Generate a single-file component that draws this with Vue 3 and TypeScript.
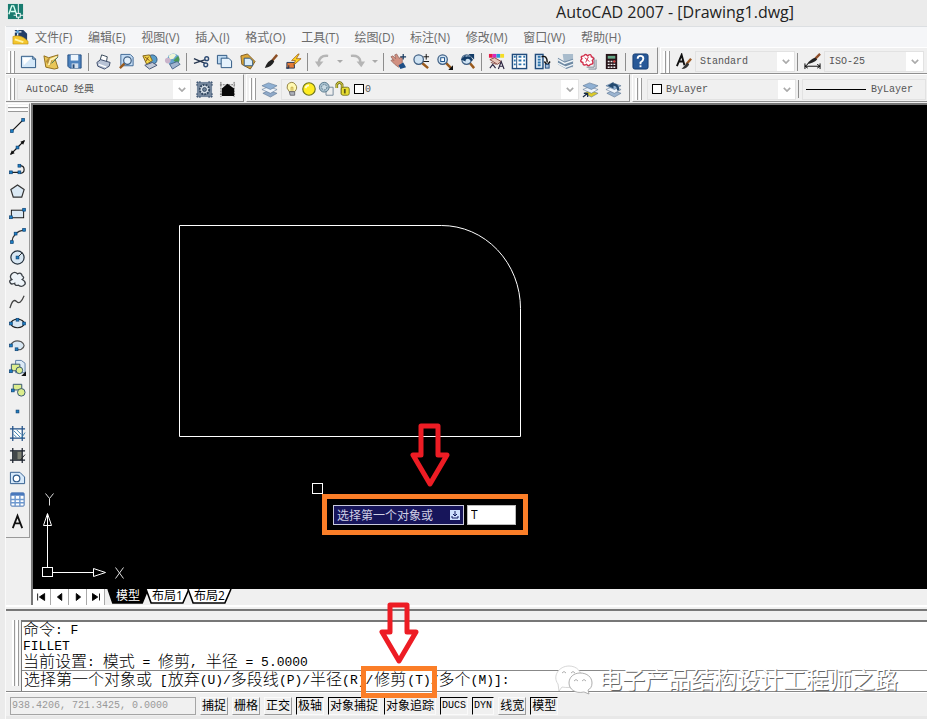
<script setup lang="ts">
import { ref } from 'vue'

interface Tool {
  icon: string
  label: string
}

const blue = '#1f4f86'
const dot = (x: number, y: number) =>
  `<rect x="${x - 1.5}" y="${y - 1.5}" width="3" height="3" fill="#1c7fc4" stroke="#0d3f70" stroke-width=".7"/>`
const lens = (cx: number, cy: number) =>
  `<path d="M${cx + 3} ${cy + 3}L16 16" stroke="#9a5a1c" stroke-width="2.6"/><circle cx="${cx}" cy="${cy}" r="5" fill="#cfe3f3" stroke="#3f5f83" stroke-width="1.3"/>`
const sheets = (accent: string) =>
  `<path d="M2 13l6-3 9 3-7 4z" fill="${accent}" stroke="#567291" stroke-width=".6"/><path d="M1 9l7-3 9 3-7 4z" fill="#eef4fb" stroke="#567291" stroke-width=".6"/><path d="M1 5l7-3 9 3-7 4z" fill="#8fb0d3" stroke="#567291" stroke-width=".6"/>`
const brush =
  '<path d="M16 2l-6 7" stroke="#8c4f25" stroke-width="2.6"/><path d="M11 7q-5 1-8 9q7-1 10-7z" fill="#222"/>'
const printer =
  '<path d="M5 9l2-7 6 2-1 6" fill="#fff" stroke="#345"/><path d="M2 10l4-3 10 3-1 4-5 3-7-3z" fill="#b8c3d6" stroke="#384766"/><path d="M4 12l8 3" stroke="#fff" stroke-width="1.4"/>'
const hash = (fill: string, line: string) =>
  `<rect x="4" y="4" width="10" height="10" fill="${fill}"/><path d="M4 1v16M14 1v16M1 4h16M1 14h16" stroke="${line}" stroke-width="1.3"/>`

const icons: Record<string, string> = {
  app: '<rect x="1" y="1" width="16" height="16" fill="#197c70"/><path d="M2 12L5 3h2l3 9M4 9h5" stroke="#d8fff2" stroke-width="1.5"/><path d="M12 1v16M7 13h10" stroke="#fff"/><rect x="10" y="11" width="4" height="4" fill="#197c70" stroke="#fff"/>',
  doc: '<path d="M3 2h9l4 4v8H3z" fill="#233f68"/><path d="M1 9q8-3 16 5v3H1z" fill="#f4c62d" stroke="#b58a12" stroke-width=".6"/><path d="M3 12l9 3" stroke="#fff5a8" stroke-width="2"/><path d="M6 0v8M2 4h8" stroke="#fff" stroke-width="1.3"/><path d="M6 2l2 2-2 2-2-2z" fill="#58a2d8"/>',
  blank: '<path d="M1.5 3.5h12l3 3v9h-15z" fill="#d5e8f8" stroke="#27537f"/><path d="M3 5h9l-8 8z" fill="#fff"/><path d="M13.5 3.5v3h3" stroke="#27537f"/>',
  open: '<path d="M1 3l5 2 10-3-3 5 3 9-4 1-9-2z" fill="#e9c657" stroke="#8e6b19"/><path d="M3 9l3-4 4 3-3 6z" fill="#b9903b"/><path d="M6 13l2-6 7-3" stroke="#fff2b5" stroke-width="2"/><path d="M9 11l7-7" stroke="#376f55"/>',
  save: '<path d="M2 2h14v14H4l-2-2z" fill="#4d82bd" stroke="#214e82"/><path d="M5 2h8v6H5z" fill="#edf5fc"/><path d="M6 11h7v5H6z" fill="#d3dfed"/><path d="M7 12h2v4H7z" fill="#254a76"/>',
  print: printer,
  preview: '<path d="M3 1.500h10l3 3v9H3z" fill="#c2daf2" stroke="#3d6795"/><path d="M7 11l-5 5" stroke="#9a5a1c" stroke-width="2.500"/><circle cx="10" cy="8" r="4" fill="#e2effa" stroke="#3f5f83" stroke-width="1.300"/>',
  publish: '<circle cx="12" cy="7" r="5" fill="#5a9dc8" stroke="#2c5480"/><path d="M2 3l7-1 3 6-6 4z" fill="#f4d749" stroke="#806117"/><path d="M4 4l5 4M8 4l-3 5" stroke="#80511b"/><path d="M4 13l8-3 5 3-8 4z" fill="#c1c9d8" stroke="#455474"/>',
  globe: '<circle cx="10" cy="7" r="6.500" fill="#65a3cf"/><path d="M5 3q4-4 8-1l-3 4-4 1z" fill="#eef5d7"/><path d="M10 8l5-5q3 5-1 8z" fill="#4b9a54"/><circle cx="4" cy="8" r="3" fill="#c9b4cb"/><path d="M6 12l8-3 3 3-8 5z" fill="#a1b5cf" stroke="#47658b"/>',
  cut: '<path d="M1 6l12 5M1 11L13 7" stroke="#26364f" stroke-width="1.500"/><circle cx="14.500" cy="6" r="2" stroke="#304d75" stroke-width="1.500"/><circle cx="13.500" cy="12.500" r="2" stroke="#304d75" stroke-width="1.500"/>',
  copy: '<path d="M1.500 2.500h10v9h-10z" fill="#bdd9f1" stroke="#29547f"/><path d="M5.500 5.500h8l3 3v7h-11z" fill="#e5f2fc" stroke="#29547f"/>',
  paste: '<path d="M2 3l7-2 8 8-5 8-9-5z" fill="#dba637" stroke="#7e5a20"/><path d="M5.500 5.500h6l3 3v5h-9z" fill="#d9edfb" stroke="#29547f"/>',
  match: brush,
  block: '<path d="M2 10h8v6H2z" fill="#e47b38" stroke="#263958"/><path d="M14 1L7 8h4l-2 5 8-7h-5l3-5z" fill="#ffd51f" stroke="#9c5813" stroke-width=".8"/><path d="M1 16h3v-3" stroke="#102b52"/>',
  undo: '<path d="M15 3Q6 2 5 10" stroke="#b5b5b5" stroke-width="2.500"/><path d="M1 9h9l-5 6z" fill="#b5b5b5"/>',
  redo: '<path d="M2 3q10-1 10 7" stroke="#b5b5b5" stroke-width="2.500"/><path d="M8 9h9l-4 6z" fill="#b5b5b5"/>',
  pan: '<path d="M1 4l2-1 3 3-1-4 2-1 3 5 1-2 2 1v7l-4 3-4-3-4-4 2-1 1 1z" fill="#d19081" stroke="#8c5c54" stroke-width=".7"/><path d="M9 13l5-3 3 5-6 2z" fill="#1e4f86"/><path d="M14 1v6M11 4h6" stroke="#173a60" stroke-width="1.300"/>',
  zoom: lens(6, 7) + '<path d="M14 1v6M11 4h6M11 9h6" stroke="#111"/>',
  zoomwin: lens(7, 7) + '<rect x="5" y="5" width="4" height="4" fill="#fff" stroke="#174e87"/><path d="M13 18h5v-5z" fill="#111"/>',
  zoomprev: lens(8, 7) + '<path d="M5 7q5-5 9 1" stroke="#133c67" stroke-width="2.500"/><path d="M2 7l5-5v7zM10 1h6v6z" fill="#133c67"/>',
  props: '<path d="M1 1h4v4H1z" fill="#e51b47"/><path d="M5 1h4v4H5z" fill="#d42ac0"/><path d="M9 1h4v4H9z" fill="#229fd9"/><path d="M13 1h4v4h-4z" fill="#f6dd22"/><path d="M2 7l5-2 7 4-4 3zM3 10l6 2" fill="#e7c6ba" stroke="#8a4d45"/><path d="M2 16l3-4 3 4M11 17l3-8 3 8M12 14h4" stroke="#2b2540" stroke-width="1.200"/>',
  center: '<rect x="1.500" y="1.500" width="15" height="15" fill="#fff" stroke="#204c7d" stroke-width="1.500"/><path d="M6 2v14" stroke="#204c7d"/><path d="M3 4h2M3 8h2M3 12h2M8 4h3M13 4h2M8 8h3M13 8h2M8 12h3M13 12h2" stroke="#2d76ae" stroke-width="2"/>',
  palette: '<rect x="1.500" y="1.500" width="8" height="15" fill="#dceaf6" stroke="#204c7d" stroke-width="1.500"/><path d="M4 4h3M4 7h3M4 10h3M4 13h3" stroke="#2d76ae" stroke-width="2"/><path d="M8 4q6-2 6 6M11 9l3 4 3-4" stroke="#111" stroke-width="1.500"/><rect x="12" y="12" width="4" height="4" fill="#a7bfdb" stroke="#204c7d"/>',
  sheetset: '<path d="M6 1h11v14H8z" fill="#a9bccc"/><path d="M1 5l7 4 9-3v8l-7 3-9-5z" fill="#6f8aa4"/><path d="M1 7l7 4 9-3M1 11l8 4 8-3" stroke="#eef4f8" stroke-width="1.600"/>',
  markup: '<path d="M7 15h8V5M9 17h8V7" stroke="#75808f"/><path d="M4 3q2-3 4 0q4-3 4 1q4 1 1 4q2 4-2 4q-2 3-4 0q-4 2-4-2q-4-1-1-4q-2-3 2-3z" fill="#fff" stroke="#d12d49" stroke-width="1.500"/><path d="M5 5l5 4M9 4l-3 6" stroke="#d12d49"/>',
  calc: '<rect x="3" y="1" width="12" height="16" fill="#271318"/><path d="M5 3h8v3H5z" fill="#65a686"/><path d="M5 9h2M8 9h2M11 9h2M5 12h2M8 12h2M11 12h2M5 15h2M8 15h2M11 15h2" stroke="#eee" stroke-width="1.500"/><path d="M11 9h2" stroke="#e63333" stroke-width="2"/>',
  help: '<rect x="1" y="1" width="16" height="16" rx="2" fill="#285998" stroke="#143b71"/><path d="M6 6q0-3 3-3t3 3q0 2-3 4v2" stroke="#fff" stroke-width="2"/><path d="M8 14h2" stroke="#fff" stroke-width="2"/>',
  textstyle: '<path d="M2 14L7 2l3 11M4 9h5" stroke="#111" stroke-width="2"/><path d="M17 6l-5 6" stroke="#9b5a27" stroke-width="2.500"/><path d="M13 10l-6 7q6 0 8-5z" fill="#333"/>',
  dimstyle: '<path d="M17 1l-6 6" stroke="#8d4d29" stroke-width="2.500"/><path d="M12 5q-5 1-9 7q7-1 11-5z" fill="#222"/><path d="M1 11v6M17 11v6M2 14h14M4 12l-3 2 3 2M14 12l3 2-3 2" stroke="#000"/>',
  gear: '<path d="M1 1h16v16H1z" fill="#75879d"/><path d="M1 5V1h4M13 1h4v4M17 13v4h-4M5 17H1v-4" stroke="#213c5c" stroke-dasharray="2 1"/><circle cx="9" cy="9" r="5" fill="#d7dfe8" stroke="#31475f" stroke-width="2" stroke-dasharray="2 1"/><circle cx="9" cy="9" r="2" fill="#75879d" stroke="#31475f"/>',
  home: '<path d="M2 1v16M16 1v16M1 4h16M1 14h16" stroke="#666" stroke-dasharray="2 1"/><path d="M3 8l6-5 7 5v8H3z" fill="#080808"/>',
  layers: sheets('#8fa9c8'),
  bulb: '<path d="M6 12Q2 8 4 4q5-5 9 0q3 4-1 8z" fill="#fff9b1" stroke="#887837"/><path d="M6 12h6v4H7z" fill="#aeb2bb" stroke="#65666c"/><path d="M8 11V7h2v4" stroke="#c1a43a"/>',
  sun: '<circle cx="9" cy="9" r="7" fill="#ffec21" stroke="#6e741b" stroke-width="1.300"/><path d="M5 8q1-3 4-3" stroke="#fffdd0" stroke-width="2"/>',
  freeze: '<path d="M9 7h8v9H9z" fill="#eee" stroke="#6c8295"/><circle cx="7" cy="7" r="5.500" fill="#a7bfce" stroke="#537587"/><circle cx="7" cy="7" r="3" fill="#c8d9e2" stroke="#537587" stroke-dasharray="2 1"/>',
  lock: '<path d="M2 8V4q3-5 6 0v4M8 7v8" stroke="#77731a" stroke-width="3"/><path d="M2 8V4q3-5 6 0v4" stroke="#f2ea54"/><rect x="7" y="7" width="9" height="9" rx="2" fill="#e8de31" stroke="#77731a"/><path d="M11 9v5" stroke="#5a5518" stroke-width="2"/>',
  layercur: sheets('#dcca28') + '<path d="M1 17l5-4M2 13h4v4" stroke="#172a45" stroke-width="1.300"/>',
  layerprev: sheets('#9bb4d0') + '<path d="M14 10Q14 3 7 4" stroke="#23496f" stroke-width="2.500"/><path d="M3 5l6-4v7z" fill="#23496f"/>',
  line: `<path d="M3 15L15 3" stroke="#111" stroke-width="1.300"/>${dot(3, 15)}${dot(15, 3)}`,
  xline: `<path d="M2 16L16 2" stroke="#111" stroke-width="1.400"/><path d="M1 17l2-5 3 3zM17 1l-5 2 3 3z" fill="#111"/>${dot(9, 9)}`,
  pline: `<path d="M2 12h10M11 5q5 0 5 4t-4 4" stroke="#222" stroke-width="1.300"/>${dot(2, 12)}${dot(11, 12)}${dot(11, 5)}`,
  polygon: '<path d="M9 2l7 5-2.500 8h-9L2 7z" fill="#dbe9f4" stroke="#333" stroke-width="1.300"/>',
  rect: `<rect x="2.500" y="5.500" width="13" height="8" fill="#dbe9f4" stroke="#111"/>${dot(2, 13)}${dot(16, 5)}`,
  arc: `<path d="M3 16Q4 5 16 3" stroke="#333" stroke-width="1.300"/>${dot(3, 16)}${dot(7, 7)}${dot(16, 3)}`,
  circle: `<circle cx="9" cy="9" r="7" fill="#d8e7f3" stroke="#26323e" stroke-width="1.300"/><path d="M9 9l5-5" stroke="#222"/>${dot(9, 9)}`,
  cloud: '<path d="M3 9Q0 6 3 3q3-3 6 0q4-2 5 2q3 2 0 4q4 2 3 5q-3 4-7 1q-4 1-4-2q-4 2-5-1q-1-2 2-3z" fill="#edf3f8" stroke="#3b4046" stroke-width="1.400"/>',
  spline: '<path d="M1 16Q4 5 8 9t8-6" stroke="#444" stroke-width="1.300"/>',
  ellipse: `<ellipse cx="9" cy="9" rx="7" ry="4.500" fill="#d8e7f3" stroke="#222" stroke-width="1.300"/>${dot(2, 9)}${dot(16, 9)}${dot(9, 5)}`,
  earc: `<path d="M2 8q4-6 11-3q6 4 0 8q-2 1-5 0" fill="#d8e7f3" stroke="#555" stroke-width="1.300"/>${dot(2, 9)}${dot(8, 13)}`,
  insert: `<path d="M7 1.500h6l4 3v10H7z" fill="#dceaf6" stroke="#5a7ca1"/><path d="M2.500 5.500h9v7h-9z" fill="#dced8d" stroke="#31526d"/><circle cx="11" cy="12" r="3.500" fill="#dced8d" stroke="#31526d"/>${dot(2, 13)}<path d="M13 18h5v-5z" fill="#111"/>`,
  make: `<path d="M4.500 3.500h9v6h-9z" fill="#dced8d" stroke="#31526d"/><circle cx="13" cy="12" r="4" fill="#dced8d" stroke="#31526d"/>${dot(4, 10)}`,
  point: dot(9, 9),
  hatch: hash('#fff', blue) + '<path d="M5 6l7 7M8 5l5 5M5 10l3 3M13 14l4-6" stroke="#347ba8"/>',
  gradient: hash('#7d8073', '#171e2a') + '<path d="M4 4h5v10H4z" fill="#42484a"/><path d="M12 14l5-6" stroke="#222"/>',
  region: '<path d="M1.500 3.500h10l5 5v7h-15z" fill="#d8eafb" stroke="#315b8c"/><circle cx="8" cy="10" r="3.500" fill="#fff" stroke="#315b8c" stroke-width="1.300"/>',
  table: '<rect x="2" y="2" width="14" height="14" rx="1" fill="#fff" stroke="#3869ad"/><path d="M2 2h14v3H2z" fill="#4978bc"/><path d="M2 9h14M2 12.500h14M6.500 5v11M11.500 5v11" stroke="#6d98cf" stroke-width="1.500"/>',
  mtext: '<path d="M4 16L9 3l5 13M6 11h6" stroke="#111" stroke-width="1.900"/>',
}

const menus = ['文件(F)', '编辑(E)', '视图(V)', '插入(I)', '格式(O)', '工具(T)', '绘图(D)', '标注(N)', '修改(M)', '窗口(W)', '帮助(H)']

const t = (icon: string, label: string): Tool => ({ icon, label })
const standardGroups: Tool[][] = [
  [t('blank', '新建'), t('open', '打开'), t('save', '保存')],
  [t('print', '打印'), t('preview', '打印预览'), t('publish', '发布'), t('globe', '三维 DWF')],
  [t('cut', '剪切'), t('copy', '复制'), t('paste', '粘贴'), t('match', '特性匹配'), t('block', '块编辑器')],
  [t('undo', '放弃'), t('redo', '重做')],
  [t('pan', '实时平移'), t('zoom', '实时缩放'), t('zoomwin', '窗口缩放'), t('zoomprev', '缩放上一个')],
  [t('props', '特性'), t('center', '设计中心'), t('palette', '工具选项板'), t('sheetset', '图纸集管理器'), t('markup', '标记集管理器'), t('calc', '快速计算器')],
  [t('help', '帮助')],
]
const drawTools: Tool[] = [
  t('line', '直线'), t('xline', '构造线'), t('pline', '多段线'), t('polygon', '正多边形'), t('rect', '矩形'),
  t('arc', '圆弧'), t('circle', '圆'), t('cloud', '修订云线'), t('spline', '样条曲线'), t('ellipse', '椭圆'),
  t('earc', '椭圆弧'), t('insert', '插入块'), t('make', '创建块'), t('point', '点'), t('hatch', '图案填充'),
  t('gradient', '渐变色'), t('region', '面域'), t('table', '表格'), t('mtext', '多行文字'),
]
const layerStates = ['bulb', 'sun', 'freeze', 'lock']
const tabNav = [
  { label: '第一个', d: 'M3 4v8M11 4v8L5 8z' },
  { label: '上一个', d: 'M10 4v8L5 8z' },
  { label: '下一个', d: 'M6 4v8l5-4z' },
  { label: '最后一个', d: 'M4 4v8l6-4zM12 4v8' },
]
const tabs = ['模型', '布局1', '布局2']
const activeTab = ref('模型')

const modes = ref([
  { name: '捕捉', on: false, latin: false },
  { name: '栅格', on: false, latin: false },
  { name: '正交', on: false, latin: false },
  { name: '极轴', on: true, latin: false },
  { name: '对象捕捉', on: true, latin: false },
  { name: '对象追踪', on: true, latin: false },
  { name: 'DUCS', on: true, latin: true },
  { name: 'DYN', on: true, latin: true },
  { name: '线宽', on: false, latin: false },
  { name: '模型', on: true, latin: false },
])
const dynamicValue = ref('T')
const command = ref('')
</script>

<template>
  <div class="window">
    <header class="titlebar">
      <svg class="icon app-icon" viewBox="0 0 18 18" fill="none" v-html="icons.app"></svg>
      <h1>AutoCAD 2007 - [Drawing1.dwg]</h1>
    </header>

    <div class="frame">
      <nav class="menubar">
        <svg class="icon" viewBox="0 0 18 18" fill="none" v-html="icons.doc"></svg>
        <div class="menus">
          <button v-for="m in menus" :key="m" type="button">{{ m }}</button>
        </div>
      </nav>

      <div class="toolrow">
        <div class="toolbar standard">
          <span class="grip"></span>
          <template v-for="(group, gi) in standardGroups" :key="gi">
            <span v-if="gi" class="sep"></span>
            <template v-for="tool in group" :key="tool.icon">
              <button class="tool" type="button" :aria-label="tool.label">
                <svg class="icon" viewBox="0 0 18 18" fill="none" v-html="icons[tool.icon]"></svg>
              </button>
              <button v-if="gi === 3" class="more" type="button" :aria-label="tool.label + '列表'">
                <svg viewBox="0 0 6 4"><path d="M0 0h6L3 3z" fill="#aaa" /></svg>
              </button>
            </template>
          </template>
        </div>
        <div class="toolbar rest">
          <span class="grip"></span>
          <button class="tool" type="button" aria-label="文字样式">
            <svg class="icon" viewBox="0 0 18 18" fill="none" v-html="icons.textstyle"></svg>
          </button>
          <div class="combo style-combo">
            <select aria-label="文字样式"><option>Standard</option></select>
            <svg class="chevron" viewBox="0 0 10 6"><path d="M1 1l4 4 4-4" /></svg>
          </div>
          <span class="sep"></span>
          <button class="tool" type="button" aria-label="标注样式">
            <svg class="icon" viewBox="0 0 18 18" fill="none" v-html="icons.dimstyle"></svg>
          </button>
          <div class="combo style-combo">
            <select aria-label="标注样式"><option>ISO-25</option></select>
            <svg class="chevron" viewBox="0 0 10 6"><path d="M1 1l4 4 4-4" /></svg>
          </div>
        </div>
      </div>

      <div class="toolrow second">
        <div class="toolbar">
          <span class="grip"></span>
          <div class="combo workspace">
            <select aria-label="工作空间"><option>AutoCAD 经典</option></select>
            <svg class="chevron" viewBox="0 0 10 6"><path d="M1 1l4 4 4-4" /></svg>
          </div>
          <button v-for="n in ['gear', 'home']" :key="n" class="tool" type="button" :aria-label="n === 'gear' ? '工作空间设置' : '我的工作空间'">
            <svg class="icon" viewBox="0 0 18 18" fill="none" v-html="icons[n]"></svg>
          </button>
        </div>
        <div class="toolbar">
          <span class="grip"></span>
          <button class="tool" type="button" aria-label="图层特性管理器">
            <svg class="icon" viewBox="0 0 18 18" fill="none" v-html="icons.layers"></svg>
          </button>
          <div class="combo layer">
            <select aria-label="图层"><option>0</option></select>
            <span class="states">
              <svg v-for="s in layerStates" :key="s" class="small-icon" viewBox="0 0 18 18" fill="none" v-html="icons[s]"></svg>
              <i class="swatch"></i>
            </span>
            <svg class="chevron" viewBox="0 0 10 6"><path d="M1 1l4 4 4-4" /></svg>
          </div>
          <button v-for="n in ['layercur', 'layerprev']" :key="n" class="tool" type="button" :aria-label="n === 'layercur' ? '置为当前' : '上一个图层'">
            <svg class="icon" viewBox="0 0 18 18" fill="none" v-html="icons[n]"></svg>
          </button>
        </div>
        <div class="toolbar rest">
          <span class="grip"></span>
          <div class="combo color">
            <select aria-label="颜色"><option>ByLayer</option></select>
            <span class="states"><i class="swatch"></i></span>
            <svg class="chevron" viewBox="0 0 10 6"><path d="M1 1l4 4 4-4" /></svg>
          </div>
          <span class="sep"></span>
          <div class="combo linetype">
            <select aria-label="线型"><option>ByLayer</option></select>
            <span class="states"><i class="stroke"></i></span>
          </div>
        </div>
      </div>

      <main class="workspace-area">
        <aside class="draw-tools">
          <span class="grip flat"></span>
          <button v-for="tool in drawTools" :key="tool.icon" class="draw" type="button" :aria-label="tool.label">
            <svg class="icon" viewBox="0 0 18 18" fill="none" v-html="icons[tool.icon]"></svg>
          </button>
        </aside>

        <section class="viewport">
          <div class="canvas">
            <svg class="drawing" width="600" height="400" fill="none" stroke="#fff" aria-label="圆角矩形">
              <path d="M146.500 120.500H408.500A79 83 0 0 1 487.500 203.500V331.500H146.500z" />
              <rect x="279.500" y="378.500" width="10" height="10" />
            </svg>
            <svg class="ucs" width="100" height="100" fill="none" stroke="#fff" aria-label="坐标系">
              <rect x="9.500" y="78.500" width="10" height="9" />
              <path d="M14.500 78V25M20 83.500h41M10.500 36.500l4-12 4 12zM60.500 79.500l12 4-12 4z" />
              <path d="M12.500 4.500l4 5 4-5M16.500 9.500v7M82.500 78.500l8 11M90.500 78.500l-8 11" stroke="#ddd" />
            </svg>
            <div class="prompt">
              <label for="dyn">选择第一个对象或
                <svg viewBox="0 0 10 10"><rect width="10" height="10" fill="#cfe0ff" /><path d="M5 1v5M3 4l2 2 2-2M2 6v2h6V6" fill="none" stroke="#111b60" /></svg>
              </label>
              <input id="dyn" v-model="dynamicValue" type="text" />
              <svg class="arrow" viewBox="0 0 42 64"><path d="M12 3h17v29h9L21 61 4 32h8z" /></svg>
            </div>
          </div>
          <div class="tabs">
            <button v-for="n in tabNav" :key="n.label" class="nav" type="button" :aria-label="n.label">
              <svg viewBox="0 0 16 16"><path :d="n.d" fill="#000" stroke="#000" /></svg>
            </button>
            <button
              v-for="name in tabs"
              :key="name"
              type="button"
              class="tab"
              :class="{ active: name === activeTab }"
              @click="activeTab = name"
            >
              <svg viewBox="0 0 42 16" preserveAspectRatio="none"><path d="M0 0l5 15h31l6-15" /></svg>
              <span>{{ name }}</span>
            </button>
          </div>
        </section>
      </main>

      <section class="command">
        <span class="grip tall"></span>
        <div class="console">
          <div class="history">
            <p><span>命令</span><code>: F</code></p>
            <p><code>FILLET</code></p>
            <p><span>当前设置</span><code>: </code><span>模式</span><code> = </code><span>修剪</span><code>, </code><span>半径</span><code> = 5.0000</code></p>
          </div>
          <div class="entry">
            <label for="cmd"><span>选择第一个对象或</span><code> [</code><span>放弃</span><code>(U)/</code><span>多段线</span><code>(P)/</code><span>半径</span><code>(R)</code><span class="marked"><code>/</code><span>修剪</span><code>(T)</code><i class="box"></i><svg class="arrow" viewBox="0 0 42 64"><path d="M12 3h17v27h9L21 59 4 30h8z" /></svg></span><code>/</code><span>多个</span><code>(M)]:</code></label>
            <input id="cmd" v-model="command" type="text" />
          </div>
        </div>
        <div class="watermark">
          <svg viewBox="0 0 40 32" fill="#fff" stroke="#999" stroke-width=".8">
            <path d="M8 24l-3 4-1-7C-2 13 5 3 15 3c8 0 13 6 12 12-1 7-9 11-19 9z" stroke="#ccc" />
            <path d="M26 10c7 0 12 4 12 10 0 4-2 6-4 7l1 4-5-2C21 31 15 26 15 20c0-6 5-10 11-10z" />
            <path d="M8 10q2-3 4 0M17 10q2-3 4 0M20 18q2-3 4 0M28 18q2-3 4 0" fill="none" />
          </svg>
          <span>电子产品结构设计工程师之路</span>
        </div>
      </section>

      <footer class="status">
        <output>938.4206, 721.3425, 0.0000</output>
        <button
          v-for="mode in modes"
          :key="mode.name"
          type="button"
          :class="{ on: mode.on, latin: mode.latin }"
          :aria-pressed="mode.on"
          @click="mode.on = !mode.on"
        >{{ mode.name }}</button>
      </footer>
    </div>
  </div>
</template>

<style>
body {
  margin: 0;
}
</style>

<style scoped>
.window {
  --mono: "Liberation Mono", "Noto Sans CJK SC", monospace;
  --sans: "Open Sans", "Noto Sans CJK SC", sans-serif;
  display: flex;
  flex-direction: column;
  box-sizing: border-box;
  height: 100vh;
  min-height: 640px;
  padding-left: 5px;
  overflow: hidden;
  background: #ebebeb;
  color: #000;
  font-family: var(--sans);
  font-size: 12px;
}

button {
  padding: 0;
  border: 0;
  background: none;
  color: inherit;
  font: inherit;
}

.icon {
  display: block;
  flex: none;
  width: 17px;
  height: 17px;
}

.titlebar {
  display: flex;
  align-items: center;
  height: 26px;
}

.app-icon {
  margin: 0 0 4px 2px;
}

h1 {
  flex: 1;
  margin: 0 133px 2px 0;
  color: #222;
  font-size: 16px;
  font-weight: 400;
  line-height: 22px;
  text-align: right;
  white-space: nowrap;
}

.frame {
  display: flex;
  flex: 1;
  flex-direction: column;
  min-height: 0;
  border-left: 1px solid #fafafa;
  background: #f0f0f0;
}

.menubar {
  display: flex;
  align-items: center;
  gap: 6px;
  box-sizing: border-box;
  height: 21px;
  padding: 0 0 1px 6px;
  border-top: 1px solid #dcdfe2;
  background: #f5f6f8;
  color: #6b6b6b;
  white-space: nowrap;
}

.menus {
  display: flex;
  justify-content: space-between;
  width: 586px;
}

.toolrow {
  display: flex;
  height: 27px;
}

.toolrow.second {
  height: 28px;
  border-bottom: 1px solid #f0f0f0;
}

.toolbar {
  display: flex;
  flex: none;
  align-items: center;
  box-sizing: border-box;
  padding: 2px 4px 0 2px;
  border-top: 1px solid #fff;
  border-right: 1px solid #8f8f8f;
  border-bottom: 1px solid #8f8f8f;
}

.toolbar.standard {
  padding-right: 5px;
}

.toolbar + .toolbar {
  margin-left: 2px;
  border-left: 1px solid #fff;
}

.toolbar.rest {
  flex: 1 0 auto;
  border-right: 0;
}

.grip {
  flex: none;
  box-sizing: border-box;
  width: 7px;
  height: 22px;
  margin-right: 2px;
  border-right: 1px solid #999;
  background: linear-gradient(90deg, #fff 0 2px, #999 2px 3px, #f0f0f0 3px 4px, #fff 4px);
}

.tool {
  display: grid;
  flex: none;
  place-items: center;
  width: 23px;
  height: 23px;
}

.more {
  display: grid;
  flex: none;
  place-items: center;
  width: 12px;
  height: 22px;
}

.more svg {
  width: 6px;
  height: 4px;
}

.sep {
  flex: none;
  width: 1px;
  height: 18px;
  margin: 0 3px 0 2px;
  background: #8d8d8d;
}

.combo {
  display: grid;
  flex: none;
  align-items: center;
  height: 21px;
  border: 1px solid #e2e2e2;
  box-sizing: border-box;
  background: linear-gradient(270deg, #fff 17px, #f0f0f0 17px);
}

.combo > * {
  grid-area: 1 / 1;
}

.combo select {
  width: 100%;
  height: 19px;
  padding: 0 18px 0 4px;
  border: 0;
  appearance: none;
  background: transparent;
  color: #555;
  font-family: var(--mono);
  font-size: 10px;
}

.chevron {
  justify-self: end;
  width: 8px;
  height: 5px;
  margin-right: 4px;
  fill: none;
  stroke: #aaa;
  stroke-width: 2;
  pointer-events: none;
}

.style-combo {
  width: 100px;
}

.workspace {
  width: 174px;
  margin-right: 2px;
}

.workspace select {
  padding-left: 8px;
}

.layer {
  width: 298px;
}

.layer select {
  padding-left: 83px;
}

.color {
  width: 149px;
  margin-left: 3px;
}

.color select {
  padding-left: 18px;
}

.linetype {
  flex: 1 0 124px;
  background: #f0f0f0;
}

.linetype select {
  padding-left: 68px;
  padding-right: 0;
}

.states {
  display: flex;
  align-items: center;
  gap: 1px;
  padding-left: 2px;
  pointer-events: none;
}

.small-icon {
  width: 16px;
  height: 16px;
}

.swatch {
  box-sizing: border-box;
  width: 10px;
  height: 10px;
  margin-left: 2px;
  border: 1px solid #000;
  background: #fff;
}

.stroke {
  width: 60px;
  height: 1px;
  margin-left: 1px;
  background: #000;
}

.workspace-area {
  display: flex;
  flex: 1;
  align-items: flex-start;
  min-height: 0;
}

.draw-tools {
  display: flex;
  flex: none;
  flex-direction: column;
  align-items: center;
  box-sizing: border-box;
  width: 24px;
  margin-right: 1px;
  padding: 1px 0 5px;
  border-top: 1px solid #fff;
  border-right: 1px solid #999;
  border-bottom: 1px solid #999;
}

.grip.flat {
  width: 20px;
  height: 7px;
  margin: 0 0 2px;
  border: 0;
  border-bottom: 1px solid #999;
  background: linear-gradient(#fff 0 2px, #999 2px 3px, #f0f0f0 3px 4px, #fff 4px);
}

.draw {
  display: grid;
  place-items: center;
  width: 22px;
  height: 22px;
}

.viewport {
  display: flex;
  flex: 1;
  flex-direction: column;
  align-self: stretch;
  min-width: 0;
  border-top: 2px solid #777;
  border-left: 2px solid #777;
}

.canvas {
  position: relative;
  flex: 1;
  min-height: 0;
  overflow: hidden;
  background: #000;
}

.drawing {
  position: absolute;
  top: 0;
  left: 0;
}

.ucs {
  position: absolute;
  bottom: 0;
  left: 0;
}

.prompt {
  position: absolute;
  top: 389px;
  left: 289px;
  display: flex;
  align-items: center;
  gap: 3px;
  box-sizing: border-box;
  width: 206px;
  height: 41px;
  padding: 0 6px;
  border: 5px solid #fb7e28;
}

.prompt label {
  display: flex;
  align-items: center;
  justify-content: space-between;
  box-sizing: border-box;
  width: 131px;
  height: 20px;
  padding: 0 3px;
  border: 1px solid #c9c9dc;
  background: #17155a;
  color: #cfcfe5;
  white-space: nowrap;
}

.prompt label svg {
  width: 10px;
  height: 10px;
}

.prompt input {
  box-sizing: border-box;
  width: 49px;
  height: 20px;
  padding: 0 3px;
  border: 1px solid #bbb;
  background: #fff;
  font-family: var(--sans);
  font-size: 12px;
}

.arrow {
  position: absolute;
  width: 42px;
  height: 64px;
  fill: none;
  stroke: #ed1c24;
  stroke-width: 5;
  stroke-linejoin: round;
  pointer-events: none;
}

.prompt .arrow {
  top: -76px;
  left: 82px;
}

.tabs {
  display: flex;
  flex: none;
  height: 16px;
}

.nav {
  display: grid;
  place-items: center;
  width: 18px;
  border-right: 1px solid #aaa;
  background: #fff;
}

.nav svg {
  width: 14px;
  height: 14px;
}

.tab {
  display: grid;
  width: 43px;
  margin-right: -1px;
}

.tab.active {
  width: 40px;
  margin: 0 -2px 0 3px;
}

.tab > * {
  grid-area: 1 / 1;
}

.tab svg {
  width: 100%;
  height: 15px;
  overflow: visible;
  fill: #fff;
  stroke: #000;
  stroke-width: 1.5;
}

.tab.active svg {
  fill: #000;
}

.tab span {
  z-index: 1;
  line-height: 14px;
}

.tab.active {
  color: #fff;
}

.command {
  position: relative;
  display: flex;
  flex: none;
  height: 86px;
  border-bottom: 1px solid #888;
  background: linear-gradient(#fff 0 2px, #f0f0f0 2px 4px, #777 4px 6px, #f0f0f0 6px);
}

.grip.tall {
  height: 66px;
  margin: 15px 2px 0 6px;
}

.console {
  flex: 1;
  min-width: 0;
  margin-top: 15px;
  border-top: 2px solid #777;
  border-left: 1px solid #777;
  background: #fff;
  font-family: "Noto Sans CJK SC", sans-serif;
  font-size: 16px;
  font-weight: 300;
  line-height: 12px;
  white-space: pre;
}

.console p,
.entry,
.entry label,
.marked {
  display: flex;
  align-items: flex-start;
}

.console p {
  height: 16px;
  margin: 0;
  padding-left: 1px;
}

.console code {
  font-family: "Liberation Mono", monospace;
  font-size: 13px;
  font-weight: 400;
  line-height: 18px;
}

.entry {
  box-sizing: border-box;
  height: 20px;
  padding: 1px 0 0 2px;
  border-top: 1px solid #888;
}

.entry input {
  flex: 1;
  min-width: 0;
  height: 18px;
  padding: 0 2px;
  border: 0;
  outline: 0;
  background: transparent;
  font-family: "Liberation Mono", monospace;
  font-size: 13px;
}

.marked {
  position: relative;
  z-index: 2;
  gap: 1px;
}

.box {
  position: absolute;
  top: -6px;
  right: -6px;
  left: -5px;
  box-sizing: border-box;
  height: 32px;
  border: 5px solid #fb7e28;
}

.marked .arrow {
  top: -70px;
  left: 12px;
}

.watermark {
  position: absolute;
  right: 29px;
  bottom: -4px;
  display: flex;
  align-items: center;
  gap: 5px;
  color: #fff;
  font-size: 23px;
  line-height: 30px;
  text-shadow: 1px 1px 0 #666;
  white-space: nowrap;
  pointer-events: none;
}

.watermark svg {
  width: 40px;
  height: 32px;
}

.status {
  display: flex;
  flex: none;
  align-items: center;
  gap: 4px;
  box-sizing: border-box;
  height: 27px;
  padding: 2px 0 0 4px;
  border-top: 1px solid #fff;
  border-bottom: 3px solid #e8e8e8;
}

.status output {
  box-sizing: border-box;
  width: 186px;
  height: 18px;
  padding-left: 1px;
  border: 1px solid #a5a5a5;
  color: #999;
  font-family: var(--mono);
  font-size: 10px;
  line-height: 16px;
}

.status button {
  height: 18px;
  padding: 0 1px;
  border: 1px solid;
  border-color: #fafafa #999 #999 #fafafa;
  line-height: 16px;
  white-space: nowrap;
}

.status button.on {
  border-color: #000 #fafafa #fafafa #000;
}

.status button.latin {
  font-family: var(--mono);
  font-size: 10px;
}
</style>
